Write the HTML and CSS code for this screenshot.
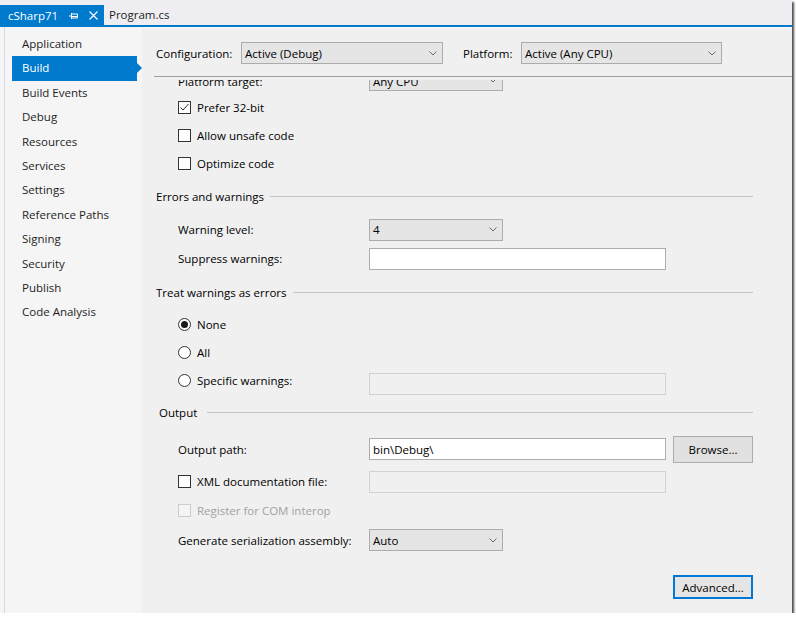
FILE: index.html
```html
<!DOCTYPE html>
<html>
<head>
<meta charset="utf-8">
<link rel="stylesheet" href="styles.css">
</head>
<body>
<div class="window">
  <div class="tabbar">
    <div class="tab-active">
      <span class="tab-title">cSharp71</span>
      <svg class="pin" width="10" height="8" viewBox="0 0 10 8"><path d="M0 4H2.5M2.5 1V7M2.5 2H8.5V6H2.5M3 4.5H8" stroke="#fff" stroke-width="1" fill="none"/></svg>
      <svg class="close" width="9" height="9" viewBox="0 0 9 9"><path d="M0.5 0.5L8.5 8.5M8.5 0.5L0.5 8.5" stroke="#fff" stroke-width="1.2" fill="none"/></svg>
    </div>
    <div class="tab">Program.cs</div>
  </div>
  <div class="body">
    <nav class="sidebar">
      <div class="nav-item">Application</div>
      <div class="nav-item active">Build</div>
      <div class="nav-item">Build Events</div>
      <div class="nav-item">Debug</div>
      <div class="nav-item">Resources</div>
      <div class="nav-item">Services</div>
      <div class="nav-item">Settings</div>
      <div class="nav-item">Reference Paths</div>
      <div class="nav-item">Signing</div>
      <div class="nav-item">Security</div>
      <div class="nav-item">Publish</div>
      <div class="nav-item">Code Analysis</div>
    </nav>
    <main class="main">
      <div class="header">
        <span class="hlabel-config">Configuration:</span>
        <div class="select select-config"><span>Active (Debug)</span><svg class="chev" width="8" height="5" viewBox="0 0 8 5"><polyline points="0.5,0.5 4,4 7.5,0.5" fill="none" stroke="#6a6a6a"/></svg></div>
        <span class="hlabel-platform">Platform:</span>
        <div class="select select-platform"><span>Active (Any CPU)</span><svg class="chev" width="8" height="5" viewBox="0 0 8 5"><polyline points="0.5,0.5 4,4 7.5,0.5" fill="none" stroke="#6a6a6a"/></svg></div>
      </div>
      <div class="scroll">
        <div class="content">
          <div class="row h28">
            <span class="label label-low">Platform target:</span>
            <div class="select select-small"><span class="low">Any CPU</span><svg class="chev" width="8" height="5" viewBox="0 0 8 5"><polyline points="0.5,0.5 4,4 7.5,0.5" fill="none" stroke="#6a6a6a"/></svg></div>
          </div>
          <div class="row h27">
            <span class="check"><svg width="11" height="11" viewBox="0 0 11 11"><polyline points="1.5,5.5 4,8 9.5,2" fill="none" stroke="#333" stroke-width="1"/></svg></span>
            <span>Prefer 32-bit</span>
          </div>
          <div class="row h28"><span class="check"></span><span>Allow unsafe code</span></div>
          <div class="row h28"><span class="check"></span><span>Optimize code</span></div>

          <div class="group h38"><span>Errors and warnings</span><span class="rule"></span></div>
          <div class="row h29">
            <span class="label">Warning level:</span>
            <div class="select select-small"><span>4</span><svg class="chev" width="8" height="5" viewBox="0 0 8 5"><polyline points="0.5,0.5 4,4 7.5,0.5" fill="none" stroke="#6a6a6a"/></svg></div>
          </div>
          <div class="row h29">
            <span class="label">Suppress warnings:</span>
            <div class="input"></div>
          </div>

          <div class="group h38"><span>Treat warnings as errors</span><span class="rule"></span></div>
          <div class="row h27"><span class="radio checked"></span><span>None</span></div>
          <div class="row h28"><span class="radio"></span><span>All</span></div>
          <div class="row h28">
            <span class="label"><span class="radio"></span><span>Specific warnings:</span></span>
            <div class="input disabled shift"></div>
          </div>

          <div class="group group-output h36"><span>Output</span><span class="rule"></span></div>
          <div class="row h38">
            <span class="label">Output path:</span>
            <div class="input"><span>bin\Debug\</span></div>
            <div class="button browse">Browse...</div>
          </div>
          <div class="row h27">
            <span class="label"><span class="check"></span><span>XML documentation file:</span></span>
            <div class="input disabled"></div>
          </div>
          <div class="row h30 muted"><span class="check dis"></span><span>Register for COM interop</span></div>
          <div class="row h30">
            <span class="label">Generate serialization assembly:</span>
            <div class="select select-small"><span>Auto</span><svg class="chev" width="8" height="5" viewBox="0 0 8 5"><polyline points="0.5,0.5 4,4 7.5,0.5" fill="none" stroke="#6a6a6a"/></svg></div>
          </div>
          <div class="actions">
            <div class="button advanced">Advanced...</div>
          </div>
        </div>
      </div>
    </main>
  </div>
</div>
</body>
</html>
```
FILE: styles.css
```css
html, body {
  margin: 0;
  padding: 0;
  background: #ffffff;
}
body {
  font-family: "Open Sans", "Noto Sans", "DejaVu Sans", sans-serif;
  font-size: 11.5px;
  color: #000;
}
.window {
  width: 792px;
  height: 613px;
  display: flex;
  flex-direction: column;
  background: #f0f0f0;
  box-shadow: 2px 2px 2px rgba(0, 0, 0, 0.7);
  overflow: hidden;
}
.tabbar {
  flex: none;
  height: 25px;
  background: #eeeef2;
  border-bottom: 2px solid #007acc;
  display: flex;
  align-items: flex-end;
}
.tab-active {
  height: 20px;
  width: 104px;
  box-sizing: border-box;
  background: #007acc;
  color: #fff;
  display: flex;
  align-items: center;
  padding-left: 8px;
}
.tab-title {
  width: 61px;
  flex: none;
}
.pin {
  flex: none;
  margin-top: 1px;
}
.close {
  flex: none;
  margin-left: 10px;
}
.tab {
  height: 20px;
  line-height: 20px;
  padding-left: 5px;
  color: #1e1e1e;
}
.body {
  flex: 1;
  display: flex;
  min-height: 0;
}
.sidebar {
  flex: none;
  width: 142px;
  box-sizing: border-box;
  padding-top: 5px;
  background: linear-gradient(to right, #f5f5f5 4px, #d8d8ee 4px, #d8d8ee 5px, #f5f5f5 5px);
}
.nav-item {
  margin-left: 12px;
  width: 125px;
  height: 24.4px;
  line-height: 24.4px;
  box-sizing: border-box;
  padding-left: 10px;
  color: #1e1e1e;
  position: relative;
}
.nav-item.active {
  background: #007acc;
  color: #fff;
}
.nav-item.active::after {
  content: "";
  position: absolute;
  right: -5px;
  top: 7px;
  border-left: 5px solid #007acc;
  border-top: 5px solid transparent;
  border-bottom: 5px solid transparent;
}
.main {
  flex: 1;
  min-width: 0;
  display: flex;
  flex-direction: column;
  border-top: 1px solid #fafafa;
}
.header {
  flex: none;
  display: flex;
  align-items: center;
  height: 22px;
  padding: 14px 0 12px 2px;
  margin-left: 12px;
  border-bottom: 1px solid #a0a0a0;
}
.hlabel-config {
  width: 85px;
  flex: none;
}
.hlabel-platform {
  width: 58px;
  margin-left: 20px;
  flex: none;
}
.select {
  height: 22px;
  box-sizing: border-box;
  background: #e5e5e5;
  border: 1px solid #acacac;
  display: flex;
  align-items: center;
  justify-content: space-between;
  padding: 0 5px 0 3px;
  flex: none;
}
.select-config {
  width: 202px;
}
.select-platform {
  width: 201px;
}
.select-small {
  width: 134px;
}
.chev {
  flex: none;
}
.scroll {
  flex: 1;
  overflow: hidden;
  min-height: 0;
  margin-top: 3px;
}
.content {
  margin-top: -14px;
}
.row {
  display: flex;
  align-items: center;
  padding-left: 36px;
}
.h27 { height: 27px; }
.h28 { height: 28px; }
.h29 { height: 29px; }
.h30 { height: 30px; }
.h36 { height: 36px; }
.h38 { height: 38px; }
.label {
  width: 191px;
  flex: none;
  display: flex;
  align-items: center;
}
.label-low {
  padding-top: 3px;
}
.low {
  padding-top: 3px;
}
.check {
  width: 13px;
  height: 13px;
  box-sizing: border-box;
  border: 1px solid #333;
  background: #fff;
  margin-right: 6px;
  flex: none;
  display: flex;
  align-items: center;
  justify-content: center;
}
.check.dis {
  border-color: #cccccc;
  background: #f4f4f4;
}
.radio {
  width: 13px;
  height: 13px;
  box-sizing: border-box;
  border: 1px solid #333;
  border-radius: 50%;
  background: #fff;
  margin-right: 6px;
  flex: none;
  display: flex;
  align-items: center;
  justify-content: center;
}
.radio.checked::after {
  content: "";
  width: 7px;
  height: 7px;
  border-radius: 50%;
  background: #1a1a1a;
}
.muted {
  color: #a2a2a2;
}
.group {
  display: flex;
  align-items: center;
  padding-left: 14px;
  padding-right: 39px;
}
.group-output {
  padding-left: 17px;
}
.rule {
  flex: 1;
  height: 1px;
  background: #c4c4c4;
  margin-left: 6px;
}
.group-output .rule {
  margin-left: 10px;
}
.input {
  width: 297px;
  height: 22px;
  box-sizing: border-box;
  background: #fff;
  border: 1px solid #acacac;
  display: flex;
  align-items: center;
  padding-left: 3px;
  flex: none;
}
.input.disabled {
  background: #f0f0f0;
  border-color: #d2d2d2;
}
.input.shift {
  margin-top: 8px;
}
.button {
  width: 80px;
  box-sizing: border-box;
  background: #e1e1e1;
  border: 1px solid #adadad;
  display: flex;
  align-items: center;
  justify-content: center;
  flex: none;
}
.browse {
  height: 27px;
  margin-left: 7px;
}
.actions {
  display: flex;
  justify-content: flex-end;
  padding-right: 39px;
  margin-top: 20px;
}
.advanced {
  height: 24px;
  border: 2px solid #0078d7;
  background: #e5e5e5;
}
```
